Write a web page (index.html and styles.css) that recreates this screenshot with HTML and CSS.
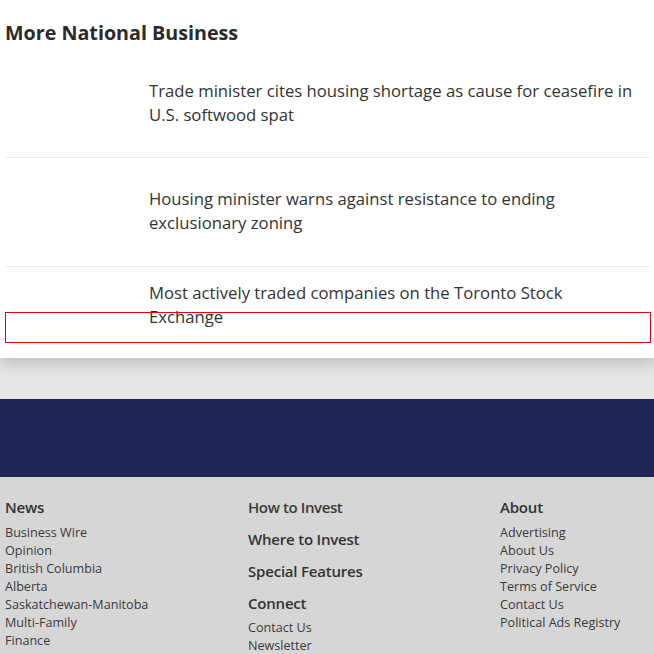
FILE: index.html
```html
<!DOCTYPE html>
<html>
<head>
<meta charset="utf-8">
<link rel="stylesheet" href="styles.css">
</head>
<body>
<main class="card">
  <h2 class="section-title">More National Business</h2>
  <ul class="articles">
    <li class="article first"><div class="thumb"></div><a class="article-title" href="#">Trade minister cites housing shortage as cause for ceasefire in U.S. softwood spat</a></li>
    <li class="article middle"><div class="thumb"></div><a class="article-title" href="#">Housing minister warns against resistance to ending exclusionary zoning</a></li>
    <li class="article last"><div class="thumb"></div><a class="article-title" href="#">Most actively traded companies on the Toronto Stock Exchange</a></li>
  </ul>
  <div class="ad-slot"></div>
</main>
<div class="spacer"></div>
<div class="navband"></div>
<footer class="footer">
  <div class="fcol">
    <h3 class="fhead">News</h3>
    <ul class="flinks">
      <li>Business Wire</li>
      <li>Opinion</li>
      <li>British Columbia</li>
      <li>Alberta</li>
      <li>Saskatchewan-Manitoba</li>
      <li>Multi-Family</li>
      <li>Finance</li>
      <li>Permits</li>
    </ul>
  </div>
  <div class="fcol">
    <h3 class="fhead light">How to Invest</h3>
    <h3 class="fhead">Where to Invest</h3>
    <h3 class="fhead">Special Features</h3>
    <h3 class="fhead">Connect</h3>
    <ul class="flinks tight">
      <li>Contact Us</li>
      <li>Newsletter</li>
    </ul>
  </div>
  <div class="fcol">
    <h3 class="fhead">About</h3>
    <ul class="flinks">
      <li>Advertising</li>
      <li>About Us</li>
      <li>Privacy Policy</li>
      <li>Terms of Service</li>
      <li>Contact Us</li>
      <li>Political Ads Registry</li>
    </ul>
  </div>
</footer>
</body>
</html>
```

FILE: styles.css
```css
* { box-sizing: border-box; }
html, body { margin: 0; padding: 0; }
body {
  font-family: "Open Sans", "Liberation Sans", sans-serif;
  color: #333;
  background: #d6d6d6;
  overflow: hidden;
}
.card {
  position: relative;
  background: #fff;
  padding: 18px 4px 0 5px;
  height: 358px;
  box-shadow: 0 6px 14px rgba(0,0,0,0.18);
  z-index: 1;
}
.section-title {
  margin: 0;
  font-size: 19.7px;
  font-weight: 700;
  line-height: 30px;
  color: #2b2b2b;
}
.articles { list-style: none; margin: 0; padding: 0; }
.article {
  display: flex;
  align-items: center;
  padding-right: 14px;
  border-bottom: 1px solid #ececec;
}
.article.first { padding-top: 31px; padding-bottom: 30px; }
.article.middle { padding-top: 29px; padding-bottom: 31px; }
.article.last { padding-top: 14px; border-bottom: none; }
.thumb { width: 144px; flex: none; }
.article-title {
  font-size: 16.7px;
  line-height: 24px;
  color: #333;
  text-decoration: none;
}
.ad-slot {
  position: absolute;
  left: 5px;
  right: 3px;
  top: 312px;
  height: 31px;
  border: 1px solid #e00;
}
.spacer { height: 41px; background: #e6e6e6; }
.navband { height: 78px; background: #1e2656; }
.footer {
  display: grid;
  grid-template-columns: 243px 252px 1fr;
  padding: 19px 5px 0 5px;
  background: #d6d6d6;
}
.fhead {
  margin: 0 0 9px;
  font-size: 15px;
  font-weight: 600;
  line-height: 23px;
  letter-spacing: -0.2px;
  color: #333;
}
.fhead.light { font-weight: 600; letter-spacing: -0.4px; color: #3a3a3a; }
.flinks {
  list-style: none;
  margin: -4px 0 0;
  padding: 0;
  font-size: 12.6px;
  line-height: 18px;
  color: #3a3a3a;
}
.flinks.tight { margin-top: -5px; }
```
